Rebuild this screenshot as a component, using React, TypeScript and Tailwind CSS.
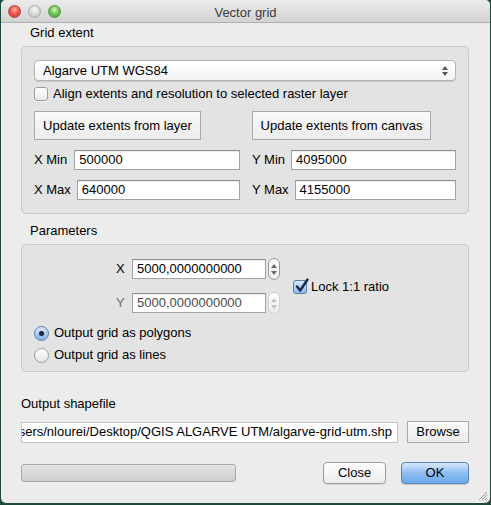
import React from "react";

const font = { fontFamily: '"Liberation Sans", Arial, sans-serif' };

function Light({ color }: { color: "red" | "gray" | "green" }) {
  const cls =
    color === "red"
      ? "bg-[radial-gradient(circle_at_50%_35%,#ffb3ae_0%,#f0584f_45%,#c5322c_100%)] border-[#b2453f]"
      : color === "gray"
        ? "bg-[radial-gradient(circle_at_50%_35%,#fafafa_0%,#d9d9d9_50%,#b8b8b8_100%)] border-[#a9a9a9]"
        : "bg-[radial-gradient(circle_at_50%_35%,#d8f5b8_0%,#74c65a_45%,#3f9a2f_100%)] border-[#4f9a3c]";
  return <div className={`h-[13px] w-[13px] rounded-full border ${cls}`} />;
}

function CheckBox({ checked = false }: { checked?: boolean }) {
  if (checked) {
    return (
      <div className="relative h-[14px] w-[14px] shrink-0 rounded-[3px] border border-[#5b7fae] bg-gradient-to-b from-[#d9e8fa] to-[#8fb8ea]">
        <svg
          className="absolute left-[1px] top-[-3px]"
          width="14"
          height="15"
          viewBox="0 0 14 15"
        >
          <path
            d="M2 8.5 L5.2 12.5 L12.5 1.5"
            fill="none"
            stroke="#1a2a44"
            strokeWidth="2.4"
            strokeLinecap="round"
            strokeLinejoin="round"
          />
        </svg>
      </div>
    );
  }
  return (
    <div className="h-[14px] w-[14px] shrink-0 rounded-[3px] border border-[#9d9d9d] bg-gradient-to-b from-[#ffffff] to-[#e9e9e9] shadow-[0_1px_0_rgba(255,255,255,0.6)]" />
  );
}

function Radio({ checked = false }: { checked?: boolean }) {
  if (checked) {
    return (
      <div className="flex h-[15px] w-[15px] shrink-0 items-center justify-center rounded-full border border-[#5b7fae] bg-gradient-to-b from-[#d9e8fa] to-[#86b2e8]">
        <div className="h-[5px] w-[5px] rounded-full bg-[#1b2638]" />
      </div>
    );
  }
  return (
    <div className="h-[15px] w-[15px] shrink-0 rounded-full border border-[#9d9d9d] bg-gradient-to-b from-[#ffffff] to-[#e6e6e6]" />
  );
}

function Field({ value, className = "" }: { value: string; className?: string }) {
  return (
    <div
      className={`flex h-[20px] items-center border border-[#a3a3a3] border-t-[#8e8e8e] bg-white pl-[4px] text-[13px] shadow-[inset_0_1px_1px_rgba(0,0,0,0.08)] ${className}`}
    >
      {value}
    </div>
  );
}

function Spinner({ disabled = false }: { disabled?: boolean }) {
  const c = disabled ? "#c2c2c2" : "#6a6a6a";
  return (
    <div
      className={`flex h-[22px] w-[12px] flex-col items-center justify-center gap-[3px] rounded-[6px] border ${
        disabled ? "border-[#cfcfcf]" : "border-[#9a9a9a]"
      } bg-gradient-to-b from-[#ffffff] to-[#ececec]`}
    >
      <svg width="6" height="4" viewBox="0 0 6 4">
        <path d="M3 0 L6 4 L0 4 Z" fill={c} />
      </svg>
      <svg width="6" height="4" viewBox="0 0 6 4">
        <path d="M0 0 L6 0 L3 4 Z" fill={c} />
      </svg>
    </div>
  );
}

function SquareButton({ label, className = "" }: { label: string; className?: string }) {
  return (
    <div
      className={`flex h-[29px] items-center justify-center border border-[#a9a9a9] bg-gradient-to-b from-[#fafafa] to-[#ececec] text-[13px] text-black ${className}`}
    >
      {label}
    </div>
  );
}

export default function App() {
  return (
    <div className="h-[505px] w-[491px] bg-[#1e4a3d]" style={font}>
      <div className="relative mx-[1px] flex h-[503px] flex-col overflow-hidden rounded-[5px] bg-[#ececec]">
        {/* title bar */}
        <div className="relative flex h-[23px] shrink-0 items-center border-b border-[#b0b0b0] bg-gradient-to-b from-[#ececec] to-[#d2d2d2]">
          <div className="flex gap-[7px] pl-[7px]">
            <Light color="red" />
            <Light color="gray" />
            <Light color="green" />
          </div>
          <div className="absolute inset-x-0 top-[3px] text-center text-[13px] text-[#3c3c3c]">
            Vector grid
          </div>
        </div>

        <div className="flex flex-col pl-[20px] pr-[21px] text-[13px] text-black">
          {/* Grid extent */}
          <div className="mt-[2px] h-[16px] pl-[9px] leading-[16px]">Grid extent</div>
          <div className="mt-[5px] flex h-[168px] flex-col rounded-[5px] border border-[#c8c8c8] bg-[#e3e3e3] px-[12px] pt-[13px]">
            <div className="flex h-[21px] items-center justify-between rounded-[4px] border border-[#b3b3b3] bg-gradient-to-b from-[#ffffff] to-[#f3f3f3] pl-[8px] pr-[7px] shadow-[0_1px_1px_rgba(0,0,0,0.12)]">
              <span>Algarve UTM WGS84</span>
              <div className="flex flex-col gap-[2px]">
                <svg width="6" height="4" viewBox="0 0 6 4">
                  <path d="M3 0 L6 4 L0 4 Z" fill="#555" />
                </svg>
                <svg width="6" height="4" viewBox="0 0 6 4">
                  <path d="M0 0 L6 0 L3 4 Z" fill="#555" />
                </svg>
              </div>
            </div>
            <div className="mt-[5px] flex h-[16px] items-center gap-[5px]">
              <CheckBox />
              <span>Align extents and resolution to selected raster layer</span>
            </div>
            <div className="mt-[9px] flex gap-[51px]">
              <SquareButton label="Update extents from layer" className="w-[167px]" />
              <SquareButton label="Update extents from canvas" className="w-[179px]" />
            </div>
            <div className="mt-[10px] flex gap-[12px]">
              <div className="flex w-[206px] items-center gap-[7px]">
                <span>X Min</span>
                <Field value="500000" className="flex-1 text-black" />
              </div>
              <div className="flex flex-1 items-center gap-[6px]">
                <span>Y Min</span>
                <Field value="4095000" className="flex-1 text-black" />
              </div>
            </div>
            <div className="mt-[10px] flex gap-[12px]">
              <div className="flex w-[206px] items-center gap-[6px]">
                <span>X Max</span>
                <Field value="640000" className="flex-1 text-black" />
              </div>
              <div className="flex flex-1 items-center gap-[6px]">
                <span>Y Max</span>
                <Field value="4155000" className="flex-1 text-black" />
              </div>
            </div>
          </div>

          {/* Parameters */}
          <div className="mt-[9px] h-[16px] pl-[9px] leading-[16px]">Parameters</div>
          <div className="mt-[5px] flex h-[128px] flex-col rounded-[5px] border border-[#c8c8c8] bg-[#e3e3e3] px-[12px] pt-[13px]">
            <div className="flex items-center">
              <div className="flex flex-col gap-[12px] pl-[82px]">
                <div className="flex h-[22px] items-center">
                  <span className="w-[16px]">X</span>
                  <Field value="5000,0000000000" className="w-[134px] text-black" />
                  <div className="ml-[2px]">
                    <Spinner />
                  </div>
                </div>
                <div className="flex h-[22px] items-center">
                  <span className="w-[16px] text-[#6f6f6f]">Y</span>
                  <Field value="5000,0000000000" className="w-[134px] text-[#4a4a4a]" />
                  <div className="ml-[2px]">
                    <Spinner disabled />
                  </div>
                </div>
              </div>
              <div className="ml-[13px] flex items-center gap-[4px] pt-[1px]">
                <CheckBox checked />
                <span>Lock 1:1 ratio</span>
              </div>
            </div>
            <div className="mt-[11px] flex h-[16px] items-center gap-[5px]">
              <Radio checked />
              <span>Output grid as polygons</span>
            </div>
            <div className="mt-[6px] flex h-[16px] items-center gap-[5px]">
              <Radio />
              <span>Output grid as lines</span>
            </div>
          </div>

          {/* Output */}
          <div className="mt-[24px] h-[16px] leading-[16px]">Output shapefile</div>
          <div className="mt-[9px] flex h-[22px] items-center justify-between">
            <div className="flex h-[21px] w-[377px] items-center justify-end overflow-hidden whitespace-nowrap border border-[#c4c4c4] bg-white pr-[5px]">
              /Users/nlourei/Desktop/QGIS ALGARVE UTM/algarve-grid-utm.shp
            </div>
            <div className="flex h-[22px] w-[62px] items-center justify-center border border-[#a9a9a9] bg-gradient-to-b from-[#fafafa] to-[#ececec]">
              Browse
            </div>
          </div>

          <div className="mt-[19px] flex h-[22px] items-center">
            <div className="h-[18px] w-[215px] rounded-[3px] border border-[#a6a6a6] bg-gradient-to-b from-[#e3e3e3] to-[#cfcfcf]" />
            <div className="ml-auto flex h-[22px] w-[63px] items-center justify-center rounded-[4px] border border-[#9c9c9c] bg-gradient-to-b from-[#ffffff] to-[#ececec] shadow-[0_1px_1px_rgba(0,0,0,0.1)]">
              Close
            </div>
            <div className="ml-[15px] flex h-[22px] w-[68px] items-center justify-center rounded-[4px] border border-[#5a83b8] bg-gradient-to-b from-[#d6e8fc] via-[#8fbef0] to-[#6aa9ec] shadow-[0_1px_1px_rgba(0,0,0,0.15)]">
              OK
            </div>
          </div>
        </div>

        {/* resize grip */}
        <svg className="absolute bottom-[2px] right-[2px]" width="12" height="12" viewBox="0 0 12 12">
          <path d="M11 3 L3 11 M11 6 L6 11 M11 9 L9 11" stroke="#9a9a9a" strokeWidth="1" />
        </svg>
      </div>
    </div>
  );
}
